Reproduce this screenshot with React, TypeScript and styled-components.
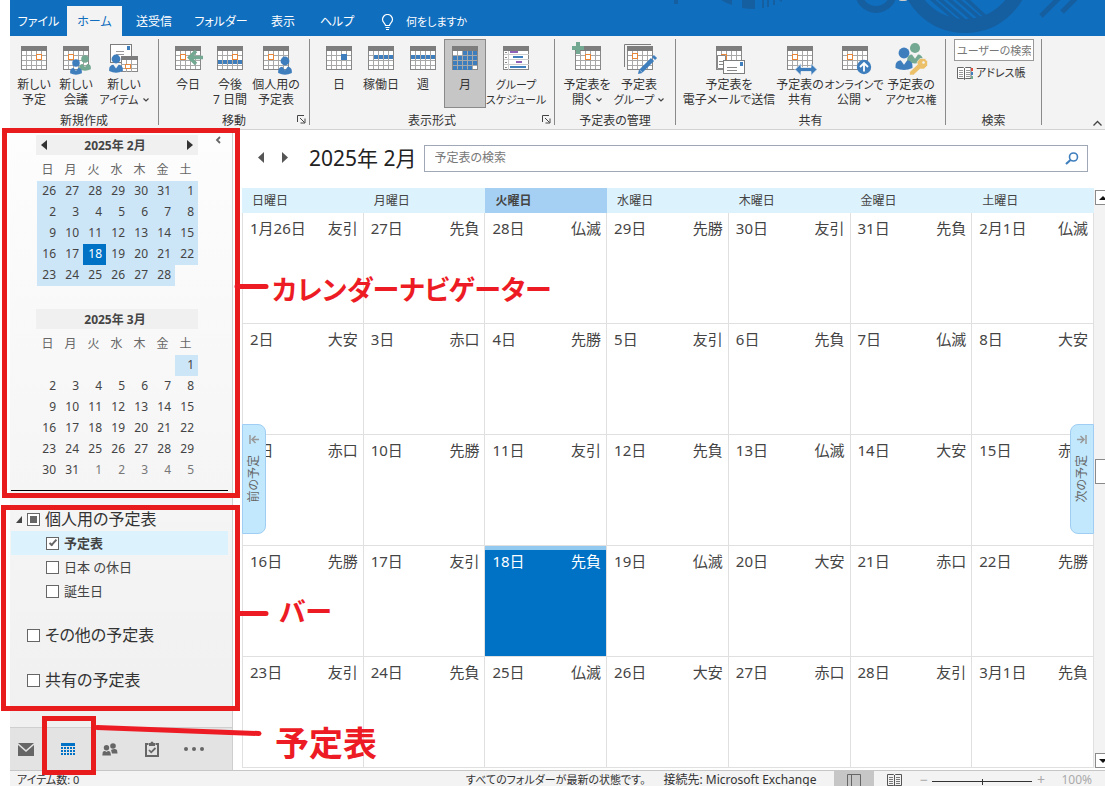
import React from "react";
import styled, { createGlobalStyle, css } from "styled-components";

const GlobalStyle = createGlobalStyle`
  *, *::before, *::after { box-sizing: border-box; }
  html, body { margin: 0; background: #fff; }
  body, button, input, table {
    font-family: "Noto Sans", "Noto Sans CJK JP", sans-serif;
    font-size: 12px;
    line-height: 16px;
    color: #333;
    font-feature-settings: "palt" 1;
  }
  button { border: 0; padding: 0; background: none; cursor: pointer; }
`;

/* ---------- shell ---------- */

const Page = styled.div`
  position: relative;
  height: 100vh;
  min-width: 1100px;
  padding-left: 10px;
  display: flex;
  flex-direction: column;
  overflow: hidden;
  white-space: nowrap;
`;

const TitleBar = styled.header`
  position: relative;
  flex: 0 0 36px;
  display: flex;
  align-items: flex-end;
  background: #106ebe;
`;

const Decoration = styled.svg`
  position: absolute;
  top: 0;
  right: 0;
`;

const Tab = styled.button<{ $w: number; $active?: boolean }>`
  width: ${(p) => p.$w}px;
  height: 30px;
  padding-top: 2px;
  color: ${(p) => (p.$active ? "#106ebe" : "#fff")};
  background: ${(p) => (p.$active ? "#f3f3f3" : "transparent")};
`;

const TellMe = styled.button`
  display: flex;
  align-items: center;
  gap: 12px;
  height: 30px;
  padding: 2px 0 0 17px;
  font-size: 11px;
  color: #fff;
`;

/* ---------- ribbon ---------- */

const Ribbon = styled.section`
  flex: 0 0 94px;
  display: flex;
  padding-top: 3px;
  background: #f3f3f3;
  border-bottom: 1px solid #d2d2d2;
`;

const Group = styled.div<{ $w: number }>`
  position: relative;
  flex: 0 0 ${(p) => p.$w}px;
  height: 86px;
  border-right: 1px solid #8a8a8a;
  display: flex;
  flex-direction: column;
`;

const GroupItems = styled.div<{ $pad: number }>`
  flex: 1;
  display: flex;
  align-items: flex-start;
  padding-left: ${(p) => p.$pad}px;
`;

const GroupLabel = styled.div`
  text-align: center;
  height: 14px;
  line-height: 20px;
`;

const Launcher = styled.button`
  position: absolute;
  right: 2px;
  bottom: 0;
  width: 10px;
  height: 10px;
  display: flex;
`;

const RibbonButton = styled.button<{ $w: number; $active?: boolean }>`
  width: ${(p) => p.$w}px;
  height: 69px;
  display: flex;
  flex-direction: column;
  align-items: center;
  line-height: 15px;
  border: 1px solid ${(p) => (p.$active ? "#8a8a8a" : "transparent")};
  background: ${(p) => (p.$active ? "#c6c6c6" : "transparent")};
`;

const RibbonLine = styled.span<{ $kana: boolean }>`
  font-size: ${(p) => (p.$kana ? 11 : 12)}px;
`;

const IconBox = styled.svg`
  flex: 0 0 37px;
  width: 40px;
  height: 37px;
`;

const Chevron = styled.svg`
  margin-left: 4px;
  vertical-align: 2px;
`;

const FindColumn = styled.div`
  display: flex;
  flex-direction: column;
  gap: 4px;
`;

const PeopleInput = styled.input`
  width: 80px;
  height: 22px;
  padding: 0 2px;
  font-size: 11px;
  border: 1px solid #999;
  background: #fff;
  &::placeholder { color: #777; opacity: 1; }
`;

const AddressBook = styled.button`
  display: flex;
  align-items: center;
  gap: 3px;
  padding-left: 3px;
  font-size: 11px;
`;

const Collapse = styled.button`
  margin: auto 2px 0 auto;
  height: 10px;
  display: flex;
`;

/* ---------- body ---------- */

const Body = styled.div`
  flex: 1;
  min-height: 0;
  display: flex;
`;

const Sidebar = styled.aside`
  flex: 0 0 223px;
  display: flex;
  flex-direction: column;
  background: linear-gradient(#fdfdfd, #efefef);
  border-right: 1px solid #cfcfcf;
`;

const Navigator = styled.div`
  position: relative;
  display: flex;
  flex-direction: column;
  gap: 23px;
  margin: 0 4px 0 1px;
  padding: 5px 0 9px 25px;
  border-bottom: 1px solid #000;
`;

const HidePane = styled.button`
  position: absolute;
  top: 4px;
  right: 4px;
  width: 12px;
  height: 12px;
  display: flex;
`;

const Mini = styled.section`
  width: 162px;
`;

const MiniHead = styled.header`
  height: 20px;
  padding: 0 5px;
  display: flex;
  align-items: center;
  justify-content: space-between;
  background: #f0f0f0;
`;

const MiniTitle = styled.strong`
  padding: 2px 4px 0 0;
  color: #444;
`;

const ArrowSlot = styled.button`
  width: 6px;
  height: 10px;
  display: flex;
`;

const MiniTable = styled.table`
  width: 161px;
  margin-left: 1px;
  table-layout: fixed;
  border-collapse: collapse;
  th {
    height: 26px;
    padding: 3px 2px 0 0;
    font-weight: 400;
    color: #666;
  }
`;

const MiniDay = styled.td<{ $kind: "plain" | "range" | "today" | "other" }>`
  height: 21px;
  padding: 0 4px 1px 0;
  text-align: right;
  color: ${(p) => (p.$kind === "today" ? "#fff" : p.$kind === "other" ? "#777" : "#444")};
  background: ${(p) =>
    p.$kind === "today" ? "#0072c6" : p.$kind === "range" ? "#cde6f7" : "transparent"};
`;

const Tree = styled.div`
  flex: 1;
  padding: 16px 4px 0 1px;
`;

const TreeGroup = styled.label<{ $gap?: number }>`
  display: flex;
  align-items: center;
  gap: 5px;
  height: 24px;
  margin-top: ${(p) => p.$gap ?? 0}px;
  padding-left: 6px;
  font-size: 16px;
  line-height: 24px;
  color: #333;
`;

const Twisty = styled.svg`
  flex: 0 0 5px;
  width: 5px;
  height: 8px;
  overflow: visible;
`;

const TreeItem = styled.label<{ $active?: boolean }>`
  display: flex;
  align-items: center;
  gap: 5px;
  height: 24px;
  padding-left: 35px;
  font-size: 13px;
  color: #444;
  font-weight: ${(p) => (p.$active ? 700 : 400)};
  background: ${(p) => (p.$active ? "#dcf2fd" : "transparent")};
`;

const Tick = styled.input<{ $mixed?: boolean }>`
  appearance: none;
  flex: 0 0 13px;
  width: 13px;
  height: 13px;
  margin: 0;
  border: 1px solid #666;
  background: #fff;
  ${(p) =>
    p.$mixed &&
    css`
      background: #666 content-box;
      padding: 2px;
      box-shadow: inset 0 0 0 2px #fff;
    `}
  &:checked::after {
    content: "";
    display: block;
    width: 8px;
    height: 4px;
    margin: 2px 0 0 2px;
    border-left: 2px solid #666;
    border-bottom: 2px solid #666;
    transform: rotate(-48deg);
  }
`;

const ModuleBar = styled.nav`
  flex: 0 0 43px;
  display: flex;
  padding-left: 5px;
  background: #e3e3e3;
  border-top: 1px solid #cfcfcf;
`;

const ModuleButton = styled.button`
  width: 22px;
  margin-right: 20px;
  display: flex;
  align-items: center;
  justify-content: center;
  svg { flex: none; }
`;

/* ---------- month view ---------- */

const Main = styled.main`
  position: relative;
  flex: 1;
  min-width: 0;
  margin-left: 9px;
  display: flex;
  flex-direction: column;
`;

const MonthBar = styled.div`
  flex: 0 0 58px;
  display: flex;
  align-items: center;
  padding: 0 17px 2px 16px;
`;

const MonthStep = styled.button`
  width: 8px;
  height: 12px;
  margin-right: 16px;
  display: flex;
`;

const MonthTitle = styled.h1`
  margin: 0 7px 0 3px;
  font-size: 21px;
  line-height: 28px;
  font-weight: 400;
  color: #222;
`;

const SearchBox = styled.form`
  flex: 1;
  height: 27px;
  display: flex;
  align-items: center;
  padding: 0 8px 0 10px;
  border: 1px solid #a0a8b8;
`;

const SearchInput = styled.input`
  flex: 1;
  min-width: 0;
  border: 0;
  padding: 0;
  outline: 0;
  background: none;
  &::placeholder { color: #777; opacity: 1; }
`;

const GridRow = styled.div`
  flex: 1;
  min-height: 0;
  display: flex;
`;

const MonthTable = styled.table`
  flex: 1;
  width: 100%;
  height: 580px;
  table-layout: fixed;
  border-collapse: separate;
  border-spacing: 0;
`;

const WeekHead = styled.th<{ $active?: boolean }>`
  height: 25px;
  padding: 0 0 0 10px;
  text-align: left;
  font-weight: ${(p) => (p.$active ? 700 : 400)};
  color: #444;
  background: ${(p) => (p.$active ? "#a6d0f3" : "#dcf2fd")};
`;

const Cell = styled.td<{ $today?: boolean }>`
  height: 111px;
  padding: 0;
  vertical-align: top;
  border-right: 1px solid #e0e0e0;
  border-bottom: 1px solid #e0e0e0;
  font-size: 15px;
  color: ${(p) => (p.$today ? "#fff" : "#444")};
  background: ${(p) => (p.$today ? "#0072c6" : "#fff")};
  box-shadow: ${(p) => (p.$today ? "inset 0 4px 0 #92c9f0" : "none")};
  &:first-child { border-left: 1px solid #e0e0e0; }
`;

const CellHead = styled.div`
  display: flex;
  justify-content: space-between;
  padding: 4px 5px 0 7px;
  line-height: 22px;
`;

const Scroll = styled.div`
  flex: 0 0 11px;
  height: 578px;
  margin-top: 2px;
  padding-left: 1px;
  display: flex;
  flex-direction: column;
  justify-content: space-between;
  background: #f3f3f3;
  overflow: hidden;
`;

const ScrollPart = styled.button<{ $h: number }>`
  flex: none;
  width: 16px;
  height: ${(p) => p.$h}px;
  border: 1px solid #8a8a8a;
  background: #fff;
  display: flex;
  align-items: center;
  justify-content: center;
`;

const ScrollThumb = styled(ScrollPart)`
  margin-bottom: 16px;
`;

const SideTab = styled.button<{ $side: "left" | "right" }>`
  position: absolute;
  top: 294px;
  ${(p) => (p.$side === "left" ? "left: 0;" : "right: 11px;")}
  width: 24px;
  height: 110px;
  padding-top: 10px;
  display: flex;
  flex-direction: column;
  align-items: center;
  gap: 11px;
  color: #666;
  background: #c1e8fd;
  border: 1px solid #a0cdf3;
  border-radius: ${(p) => (p.$side === "left" ? "0 8px 8px 0" : "8px 0 0 8px")};
`;

const SideText = styled.span`
  writing-mode: vertical-rl;
  text-orientation: sideways;
  transform: rotate(180deg);
  line-height: 16px;
`;

/* ---------- status bar ---------- */

const StatusBar = styled.footer`
  flex: 0 0 16px;
  display: flex;
  align-items: flex-start;
  padding-left: 7px;
  background: #f3f3f3;
  border-top: 1px solid #c6c6c6;
  line-height: 18px;
  overflow: hidden;
`;

const StatusRight = styled.div`
  margin-left: auto;
  padding-right: 13px;
  display: flex;
`;

const StatusText = styled.span<{ $kana?: boolean }>`
  margin-right: 18px;
  font-size: ${(p) => (p.$kana ? 11 : 12)}px;
`;

const ViewButton = styled.button<{ $active?: boolean }>`
  width: 40px;
  height: 22px;
  display: flex;
  justify-content: center;
  padding-top: 3px;
  background: ${(p) => (p.$active ? "#c6c6c6" : "transparent")};
`;

const ZoomSlider = styled.div`
  display: flex;
  gap: 4px;
  margin: 0 16px 0 5px;
`;

const ZoomSign = styled.button`
  width: 9px;
  height: 18px;
  font-size: 14px;
  line-height: 18px;
  color: #aaa;
`;

const ZoomRange = styled.input`
  appearance: none;
  width: 100px;
  height: 1px;
  margin: 10px 0 0;
  background: #333;
  &::-webkit-slider-thumb {
    appearance: none;
    width: 1px;
    height: 6px;
    background: #333;
  }
`;

const ZoomValue = styled.span`
  color: #aaa;
`;

/* ---------- annotations ---------- */

const Marks = styled.svg`
  position: absolute;
  inset: 0;
  pointer-events: none;
`;

const Callout = styled.strong<{ $x: number; $y: number; $size: number }>`
  position: absolute;
  left: ${(p) => p.$x}px;
  top: ${(p) => p.$y}px;
  font-size: ${(p) => p.$size}px;
  line-height: 40px;
  font-weight: 700;
  color: #ed1c24;
  pointer-events: none;
`;

/* ---------- icons ---------- */

const BLUE = "#3f7ebd";
const GREEN = "#73a892";
const ORANGE = "#e8873a";

type CalProps = { x?: number; y?: number; mark?: [number, number] | null };

const Cal = ({ x = 7, y = 6, mark = [15, 8] }: CalProps) => (
  <g transform={`translate(${x} ${y})`} shapeRendering="crispEdges">
    <rect width="26" height="24" fill="#fff" />
    <path
      d="M5.5 5v19M10.5 5v19M15.5 5v19M20.5 5v19M0 9.5h26M0 14.5h26M0 19.5h26"
      stroke="#a8a8a8"
      fill="none"
    />
    <path d="M.5 0v23.5h25V0" stroke="#888" fill="none" />
    <rect width="26" height="5" fill="#7d7d7d" />
    {mark && (
      <rect x={mark[0] + 0.5} y={mark[1] + 0.5} width="5" height="5" fill="#fff" stroke={ORANGE} />
    )}
  </g>
);

const Person = ({ x, y, fill, s = 1 }: { x: number; y: number; fill: string; s?: number }) => (
  <g transform={`translate(${x} ${y}) scale(${s})`} fill={fill}>
    <circle cx="0" cy="0" r="4.2" />
    <path d="M-6.5 11.500V9.500a4 4 0 0 1 4-4L0 9l2.500-3.500a4 4 0 0 1 4 4v2q-6.500 3-13 0z" />
  </g>
);

const icons: Record<string, React.ReactNode> = {
  appt: <Cal />,
  meeting: (
    <>
      <Cal mark={[5, 8]} />
      <Person x={29} y={19} fill={GREEN} s={0.9} />
      <Person x={20} y={23} fill={BLUE} s={0.9} />
    </>
  ),
  newItem: (
    <>
      <rect x="6.500" y="4.500" width="21" height="18" fill="#fff" stroke="#7d7d7d" />
      <path d="M12 11.500h8M12 14.500h8" stroke="#999" />
      <rect x="23" y="6" width="3" height="4" fill={BLUE} />
      <g shapeRendering="crispEdges">
        <rect x="17.500" y="16.500" width="16" height="15" fill="#fff" stroke="#888" />
        <path d="M22.500 20v12M27.500 20v12M17 24.500h16M17 28.500h16" stroke="#a8a8a8" />
        <rect x="17" y="16" width="17" height="4" fill="#7d7d7d" />
        <rect x="21.500" y="24.500" width="5" height="4" fill="#fff" stroke={ORANGE} />
      </g>
      <Person x={12} y={19} fill={BLUE} s={1.05} />
    </>
  ),
  today: (
    <>
      <Cal mark={[5, 8]} />
      <path d="M35 17.500H22M28 11l-6.500 6.500L28 24" stroke={GREEN} strokeWidth="3.500" fill="none" />
    </>
  ),
  next7: (
    <>
      <Cal mark={[15, 8]} />
      <path d="M8 22h25" stroke={BLUE} strokeWidth="4" strokeDasharray="4 1" />
    </>
  ),
  personal: (
    <>
      <Cal mark={[5, 8]} />
      <Person x={29} y={21} fill={BLUE} s={1.05} />
    </>
  ),
  day: (
    <>
      <Cal mark={null} />
      <rect x="22" y="14" width="6" height="6" fill={BLUE} />
    </>
  ),
  workweek: (
    <>
      <Cal mark={null} />
      <path d="M13 17h20" stroke={BLUE} strokeWidth="4" strokeDasharray="4 1" />
    </>
  ),
  week: (
    <>
      <Cal mark={null} />
      <path d="M8 17h25" stroke={BLUE} strokeWidth="4" strokeDasharray="4 1" />
    </>
  ),
  month: (
    <>
      <Cal mark={null} />
      <path d="M18 13h15" stroke={BLUE} strokeWidth="4" strokeDasharray="4 1" />
      <path d="M8 18h25M8 23h25" stroke={BLUE} strokeWidth="4" strokeDasharray="4 1" />
      <path d="M8 28h19" stroke={BLUE} strokeWidth="4" strokeDasharray="4 1" />
    </>
  ),
  schedule: (
    <g shapeRendering="crispEdges">
      <rect x="7.500" y="6.500" width="25" height="23" fill="#fff" stroke="#888" />
      <path d="M12.500 11v19M8 14.500h25M8 19.500h25M8 24.500h25" stroke="#ccc" />
      <path d="M9 12.500h2M9 17.500h2M9 22.500h2M9 27.500h2" stroke="#888" />
      <rect x="7" y="6" width="26" height="5" fill="#7d7d7d" />
      <path d="M14 12h8M20 22h6" stroke="#8f62b8" strokeWidth="2" />
      <path d="M17 17h10M14 27h16" stroke={BLUE} strokeWidth="2" />
    </g>
  ),
  open: (
    <>
      <Cal x={8} mark={[10, 8]} />
      <path d="M5 8h12M11 2v12" stroke={GREEN} strokeWidth="4" />
    </>
  ),
  groups: (
    <>
      <path d="M5.500 27V4.500H32" stroke="#7d7d7d" fill="none" />
      <Cal x={8} mark={[5, 7]} />
      <path d="M22 31L33.500 19.500" stroke={BLUE} strokeWidth="4.500" />
      <path d="M34.500 18.500l2-2" stroke={BLUE} strokeWidth="4.500" />
      <path d="M19 34l1-4.500 3.500 3.500z" fill={BLUE} />
    </>
  ),
  email: (
    <>
      <Cal mark={[5, 8]} />
      <path d="M8.500 15.500h8v13h-8z" fill="#fff" stroke="#888" />
      <path d="M10 21.500h4M10 24.500h4" stroke="#888" />
      <rect x="14.500" y="20.500" width="21" height="13" fill="#fff" stroke="#7d7d7d" />
      <path d="M18 27.500h10M18 30.500h10" stroke="#888" />
      <rect x="31" y="22" width="3" height="4" fill={BLUE} />
    </>
  ),
  share: (
    <>
      <Cal mark={[5, 8]} />
      <path d="M15 29.500l6-6v4h10v-4l6 6-6 6v-4H21v4z" fill={BLUE} stroke="#f3f3f3" strokeWidth=".8" />
    </>
  ),
  online: (
    <>
      <Cal x={8} mark={[5, 8]} />
      <circle cx="30" cy="27" r="7.200" fill={BLUE} />
      <path d="M30 31.500v-8M26 27l4-4 4 4" stroke="#fff" strokeWidth="1.800" fill="none" />
    </>
  ),
  access: (
    <>
      <Person x={24} y={8} fill={GREEN} s={1.2} />
      <Person x={13} y={13} fill={BLUE} s={1.3} />
      <g stroke="#f3f3f3" strokeWidth=".6" fill="#ecc069">
        <path d="M26 22l3-3.500h5l2.500 3v4L33 29h-4l-6.500 6h-4v-3l8-7.500z" />
      </g>
      <circle cx="32.500" cy="22.500" r="1.300" fill="#f3f3f3" />
    </>
  ),
};

const Down = () => (
  <Chevron width="6" height="4" viewBox="0 0 6 4" aria-hidden="true">
    <path d="M.5.500L3 3 5.500.500" stroke="#444" strokeWidth="1.200" fill="none" />
  </Chevron>
);

type Item = { icon: string; w: number; lines: string[]; menu?: boolean; active?: boolean };
type GroupData = { label: string; w: number; pad: number; launcher?: boolean; items: Item[] };

const groups: GroupData[] = [
  {
    label: "新規作成", w: 149, pad: 3,
    items: [
      { icon: "appt", w: 42, lines: ["新しい", "予定"] },
      { icon: "meeting", w: 42, lines: ["新しい", "会議"] },
      { icon: "newItem", w: 54, lines: ["新しい", "アイテム"], menu: true },
    ],
  },
  {
    label: "移動", w: 151, pad: 8, launcher: true,
    items: [
      { icon: "today", w: 42, lines: ["今日"] },
      { icon: "next7", w: 42, lines: ["今後", "7 日間"] },
      { icon: "personal", w: 50, lines: ["個人用の", "予定表"] },
    ],
  },
  {
    label: "表示形式", w: 245, pad: 8, launcher: true,
    items: [
      { icon: "day", w: 42, lines: ["日"] },
      { icon: "workweek", w: 42, lines: ["稼働日"] },
      { icon: "week", w: 42, lines: ["週"] },
      { icon: "month", w: 42, lines: ["月"], active: true },
      { icon: "schedule", w: 60, lines: ["グループ", "スケジュール"] },
    ],
  },
  {
    label: "予定表の管理", w: 121, pad: 8,
    items: [
      { icon: "open", w: 48, lines: ["予定表を", "開く"], menu: true },
      { icon: "groups", w: 56, lines: ["予定表", "グループ"], menu: true },
    ],
  },
  {
    label: "共有", w: 270, pad: 8,
    items: [
      { icon: "email", w: 90, lines: ["予定表を", "電子メールで送信"] },
      { icon: "share", w: 52, lines: ["予定表の", "共有"] },
      { icon: "online", w: 56, lines: ["オンラインで", "公開"], menu: true },
      { icon: "access", w: 58, lines: ["予定表の", "アクセス権"] },
    ],
  },
];

/* Lines that open with katakana are set one size smaller so they fit their button. */
const isKana = (line: string) => /^[ァ-ヶー]{3,}/.test(line);

const LaunchIcon = () => (
  <Launcher aria-label="詳細">
    <svg width="9" height="9" viewBox="0 0 9 9">
      <path d="M.5 7V.500H7M3 3l4.500 4.500M8 3.500V8H3.500" stroke="#444" fill="none" />
    </svg>
  </Launcher>
);

const Triangle = ({ dir, w = 6, h = 10, fill = "#333" }: { dir: "left" | "right"; w?: number; h?: number; fill?: string }) => (
  <svg width={w} height={h} viewBox="0 0 6 10" preserveAspectRatio="none">
    <path d={dir === "left" ? "M6 0L0 5l6 5z" : "M0 0l6 5-6 5z"} fill={fill} />
  </svg>
);

/* ---------- data ---------- */

const weekday = ["日", "月", "火", "水", "木", "金", "土"];

const february = [
  [26, 27, 28, 29, 30, 31, 1],
  [2, 3, 4, 5, 6, 7, 8],
  [9, 10, 11, 12, 13, 14, 15],
  [16, 17, 18, 19, 20, 21, 22],
  [23, 24, 25, 26, 27, 28, 0],
];

const march = [
  [0, 0, 0, 0, 0, 0, 1],
  [2, 3, 4, 5, 6, 7, 8],
  [9, 10, 11, 12, 13, 14, 15],
  [16, 17, 18, 19, 20, 21, 22],
  [23, 24, 25, 26, 27, 28, 29],
  [30, 31, 1, 2, 3, 4, 5],
];

const febKind = (d: number) => (d === 18 ? "today" : d === 0 ? "plain" : "range");
const marKind = (d: number, row: number) =>
  row === 0 && d === 1 ? "range" : row === 5 && d < 10 ? "other" : "plain";

const weeks: [string, string][][] = [
  [["1月26日", "友引"], ["27日", "先負"], ["28日", "仏滅"], ["29日", "先勝"], ["30日", "友引"], ["31日", "先負"], ["2月1日", "仏滅"]],
  [["2日", "大安"], ["3日", "赤口"], ["4日", "先勝"], ["5日", "友引"], ["6日", "先負"], ["7日", "仏滅"], ["8日", "大安"]],
  [["9日", "赤口"], ["10日", "先勝"], ["11日", "友引"], ["12日", "先負"], ["13日", "仏滅"], ["14日", "大安"], ["15日", "赤口"]],
  [["16日", "先勝"], ["17日", "友引"], ["18日", "先負"], ["19日", "仏滅"], ["20日", "大安"], ["21日", "赤口"], ["22日", "先勝"]],
  [["23日", "友引"], ["24日", "先負"], ["25日", "仏滅"], ["26日", "大安"], ["27日", "赤口"], ["28日", "友引"], ["3月1日", "先負"]],
];

type MiniProps = {
  title: string;
  rows: number[][];
  kind: (d: number, row: number) => "plain" | "range" | "today" | "other";
  arrows?: boolean;
};

const MiniMonth = ({ title, rows, kind, arrows }: MiniProps) => (
  <Mini>
    <MiniHead>
      {arrows ? <ArrowSlot aria-label="前の月"><Triangle dir="left" /></ArrowSlot> : <span />}
      <MiniTitle>{title}</MiniTitle>
      {arrows ? <ArrowSlot aria-label="次の月"><Triangle dir="right" /></ArrowSlot> : <span />}
    </MiniHead>
    <MiniTable>
      <thead>
        <tr>{weekday.map((d) => <th key={d}>{d}</th>)}</tr>
      </thead>
      <tbody>
        {rows.map((row, r) => (
          <tr key={r}>
            {row.map((d, c) => (
              <MiniDay key={c} $kind={kind(d, r)}>{d || ""}</MiniDay>
            ))}
          </tr>
        ))}
      </tbody>
    </MiniTable>
  </Mini>
);

export default function App() {
  return (
    <Page>
      <GlobalStyle />

      <TitleBar>
        <Decoration width="445" height="36" viewBox="660 0 445 36" aria-hidden="true">
          <g fill="#155fa0">
            <rect x="674" y="0" width="4" height="4" />
            <path d="M721 0h11v5q-6-2-11-5z" />
            <path d="M742 0h13v9q-7 0-13-1z" />
            <path d="M762 0h2v8h-2zM767 0h2v7h-2zM773 0h2v5h-2zM779 0h3v2z" />
          </g>
          <g fill="none" stroke="#155fa0">
            <circle cx="876" cy="-8" r="17.500" strokeWidth="7" />
            <path d="M928-4l28 24M936-4l28 24M945-4l28 24M954-4l28 24M963-4l24 22" strokeWidth="3.500" />
            <circle cx="965" cy="-33" r="59" strokeWidth="14" />
            <path d="M1041 16l20-20M1062 12l16-16" strokeWidth="5" />
          </g>
          <ellipse cx="903" cy="0" rx="4" ry="1" fill="#ccc" />
        </Decoration>
        <Tab $w={57}>ファイル</Tab>
        <Tab $w={55} $active>ホーム</Tab>
        <Tab $w={64}>送受信</Tab>
        <Tab $w={70}>フォルダー</Tab>
        <Tab $w={54}>表示</Tab>
        <Tab $w={54}>ヘルプ</Tab>
        <TellMe>
          <svg width="13" height="17" viewBox="0 0 13 17" aria-hidden="true">
            <path
              d="M4.500 11.500c0-2-3-3-3-6a5 5 0 0 1 10 0c0 3-3 4-3 6zM4.500 13.500h4M5 15.500h3"
              stroke="#fff"
              strokeWidth="1.200"
              fill="none"
            />
          </svg>
          何をしますか
        </TellMe>
      </TitleBar>

      <Ribbon>
        {groups.map((g) => (
          <Group key={g.label} $w={g.w}>
            <GroupItems $pad={g.pad}>
              {g.items.map((it) => (
                <RibbonButton key={it.icon} $w={it.w} $active={it.active}>
                  <IconBox viewBox="0 0 40 37" aria-hidden="true">{icons[it.icon]}</IconBox>
                  {it.lines.map((line, i) => (
                    <RibbonLine key={line} $kana={isKana(line)}>
                      {line}
                      {it.menu && i === it.lines.length - 1 && <Down />}
                    </RibbonLine>
                  ))}
                </RibbonButton>
              ))}
            </GroupItems>
            <GroupLabel>{g.label}</GroupLabel>
            {g.launcher && <LaunchIcon />}
          </Group>
        ))}
        <Group $w={96}>
          <GroupItems $pad={8}>
            <FindColumn>
              <PeopleInput aria-label="ユーザーの検索" placeholder="ユーザーの検索" />
              <AddressBook>
                <svg width="16" height="13" viewBox="0 0 16 13" aria-hidden="true">
                  <path d="M.5.500h6l1 1 1-1H14v11H8.500l-1 1-1-1h-6zM7.500 1.500v11" stroke="#666" fill="#fff" />
                  <path d="M2 3.500h4M2 5.500h4M2 7.500h4M2 9.500h4M9 3.500h4M9 5.500h4M9 7.500h4M9 9.500h4" stroke="#999" />
                  <path d="M15 1v3" stroke="#e04a3a" strokeWidth="2" />
                  <path d="M15 5v3" stroke={BLUE} strokeWidth="2" />
                  <path d="M15 9v3" stroke={GREEN} strokeWidth="2" />
                </svg>
                アドレス帳
              </AddressBook>
            </FindColumn>
          </GroupItems>
          <GroupLabel>検索</GroupLabel>
        </Group>
        <Collapse aria-label="リボンを折りたたむ">
          <svg width="11" height="8" viewBox="0 0 11 8">
            <path d="M1.500 6.500l4-4 4 4" stroke="#444" strokeWidth="1.300" fill="none" />
          </svg>
        </Collapse>
      </Ribbon>

      <Body>
        <Sidebar>
          <Navigator>
            <MiniMonth title="2025年 2月" rows={february} kind={febKind} arrows />
            <MiniMonth title="2025年 3月" rows={march} kind={marKind} />
            <HidePane aria-label="ウィンドウを最小化">
              <svg width="12" height="12" viewBox="0 0 12 12">
                <path d="M8 3L5 6l3 3" stroke="#666" strokeWidth="1.800" fill="none" />
              </svg>
            </HidePane>
          </Navigator>

          <Tree>
            <TreeGroup>
              <Twisty viewBox="0 0 5 8" aria-hidden="true">
                <path d="M5 1v7h-6z" fill="#444" />
              </Twisty>
              <Tick type="checkbox" $mixed />
              個人用の予定表
            </TreeGroup>
            <TreeItem $active><Tick type="checkbox" defaultChecked />予定表</TreeItem>
            <TreeItem><Tick type="checkbox" />日本 の休日</TreeItem>
            <TreeItem><Tick type="checkbox" />誕生日</TreeItem>
            <TreeGroup $gap={20}><Twisty /><Tick type="checkbox" />その他の予定表</TreeGroup>
            <TreeGroup $gap={21}><Twisty /><Tick type="checkbox" />共有の予定表</TreeGroup>
          </Tree>

          <ModuleBar>
            <ModuleButton aria-label="メール">
              <svg width="16" height="13" viewBox="0 0 16 13">
                <path d="M0 0h16L8 7zM0 2l8 7 8-7v11H0z" fill="#666" />
              </svg>
            </ModuleButton>
            <ModuleButton aria-label="予定表">
              <svg width="14" height="12" viewBox="0 0 14 12" shapeRendering="crispEdges">
                <path d="M0 1.500h14" stroke="#0072c6" strokeWidth="3" />
                <path d="M0 5h14M0 8h14M0 11h14" stroke="#0072c6" strokeWidth="2" strokeDasharray="2 1" />
              </svg>
            </ModuleButton>
            <ModuleButton aria-label="連絡先">
              <svg width="16" height="13" viewBox="0 0 16 13" fill="#666">
                <circle cx="11" cy="3" r="2.800" />
                <path d="M9 7q4-2 6 0l.5 3.500H10z" />
                <circle cx="4.500" cy="4.800" r="2.700" />
                <path d="M.3 12.500L.8 9q1.700-2 3.700 0 2-2 3.800 0l.7 3.500z" />
              </svg>
            </ModuleButton>
            <ModuleButton aria-label="タスク">
              <svg width="14" height="16" viewBox="0 0 14 16">
                <path d="M3.500 3H1v12h12V3h-2.500" stroke="#666" strokeWidth="2" fill="none" />
                <path d="M4 2h1.500a1.500 1.500 0 0 1 3 0H10v3H4z" fill="#666" />
                <path d="M4 9l2.200 2.300L10.500 7" stroke="#666" strokeWidth="1.800" fill="none" />
              </svg>
            </ModuleButton>
            <ModuleButton aria-label="その他">
              <svg width="20" height="4" viewBox="0 0 20 4" fill="#666">
                <circle cx="2" cy="2" r="2" />
                <circle cx="10" cy="2" r="2" />
                <circle cx="18" cy="2" r="2" />
              </svg>
            </ModuleButton>
          </ModuleBar>
        </Sidebar>

        <Main>
          <MonthBar>
            <MonthStep aria-label="前へ"><Triangle dir="left" h={11} fill="#555" /></MonthStep>
            <MonthStep aria-label="次へ"><Triangle dir="right" h={11} fill="#555" /></MonthStep>
            <MonthTitle>2025年 2月</MonthTitle>
            <SearchBox>
              <SearchInput aria-label="予定表の検索" placeholder="予定表の検索" />
              <svg width="14" height="13" viewBox="0 0 14 13" aria-hidden="true">
                <circle cx="8.500" cy="5" r="4" stroke={BLUE} strokeWidth="1.600" fill="none" />
                <path d="M5.500 8L1 12" stroke={BLUE} strokeWidth="2.200" />
              </svg>
            </SearchBox>
          </MonthBar>

          <GridRow>
            <MonthTable>
              <thead>
                <tr>
                  {weekday.map((d) => (
                    <WeekHead key={d} $active={d === "火"}>{d}曜日</WeekHead>
                  ))}
                </tr>
              </thead>
              <tbody>
                {weeks.map((week, r) => (
                  <tr key={r}>
                    {week.map(([day, rokuyo]) => (
                      <Cell key={day} $today={day === "18日"}>
                        <CellHead>
                          <span>{day}</span>
                          <span>{rokuyo}</span>
                        </CellHead>
                      </Cell>
                    ))}
                  </tr>
                ))}
              </tbody>
            </MonthTable>
            <Scroll>
              <ScrollPart $h={15} aria-label="上へ">
                <svg width="8" height="4" viewBox="0 0 8 4"><path d="M0 4l4-4 4 4z" fill="#111" /></svg>
              </ScrollPart>
              <ScrollThumb $h={25} aria-label="スクロール" />
              <ScrollPart $h={15} aria-label="下へ">
                <svg width="8" height="4" viewBox="0 0 8 4"><path d="M0 0l4 4 4-4z" fill="#111" /></svg>
              </ScrollPart>
            </Scroll>
          </GridRow>

          <SideTab $side="left">
            <svg width="10" height="9" viewBox="0 0 10 9" aria-hidden="true">
              <path d="M1 0v9M10 4.500H4M6.500 1L3 4.500 6.500 8" stroke="#999" strokeWidth="1.500" fill="none" />
            </svg>
            <SideText>前の予定</SideText>
          </SideTab>
          <SideTab $side="right">
            <svg width="10" height="9" viewBox="0 0 10 9" aria-hidden="true">
              <path d="M9 0v9M0 4.500h6M3.500 1L7 4.500 3.500 8" stroke="#999" strokeWidth="1.500" fill="none" />
            </svg>
            <SideText>次の予定</SideText>
          </SideTab>
        </Main>
      </Body>

      <StatusBar>
        <StatusText $kana>アイテム数: 0</StatusText>
        <StatusRight>
          <StatusText $kana>すべてのフォルダーが最新の状態です。</StatusText>
          <StatusText>接続先: Microsoft Exchange</StatusText>
          <ViewButton $active aria-label="標準">
            <svg width="14" height="14" viewBox="0 0 14 14">
              <path d="M.5.500h13v13H.500zM4.500 0v14" stroke="#666" fill="none" />
            </svg>
          </ViewButton>
          <ViewButton aria-label="閲覧">
            <svg width="15" height="14" viewBox="0 0 15 14">
              <path d="M.5.500h6l1 1 1-1h6v11h-6l-1 1-1-1h-6zM7.500 1v12" stroke="#555" fill="none" />
              <path d="M2 3.500h4M2 5.500h4M2 7.500h4M2 9.500h4M9 3.500h4M9 5.500h4M9 7.500h4M9 9.500h4" stroke="#777" />
            </svg>
          </ViewButton>
          <ZoomSlider>
            <ZoomSign aria-label="縮小">−</ZoomSign>
            <ZoomRange type="range" aria-label="ズーム" defaultValue={50} />
            <ZoomSign aria-label="拡大">+</ZoomSign>
          </ZoomSlider>
          <ZoomValue>100%</ZoomValue>
        </StatusRight>
      </StatusBar>

      <Marks width="500" height="786" viewBox="0 0 500 786" aria-hidden="true">
        <g fill="none" stroke="#e81c1c" strokeWidth="5">
          <rect x="4.500" y="130.500" width="233" height="365" />
          <rect x="3.500" y="507.500" width="234" height="201" />
          <rect x="44.500" y="718.500" width="49" height="54" />
        </g>
        <g fill="none" stroke="#ed1c24" strokeWidth="5" strokeLinecap="round">
          <path d="M237 286.500h29M240 613.500h26" />
          <path d="M97 727.500l162 6" />
        </g>
      </Marks>
      <Callout $x={272} $y={270} $size={27}>カレンダーナビゲーター</Callout>
      <Callout $x={279} $y={592} $size={27}>バー</Callout>
      <Callout $x={275} $y={723} $size={34}>予定表</Callout>
    </Page>
  );
}
